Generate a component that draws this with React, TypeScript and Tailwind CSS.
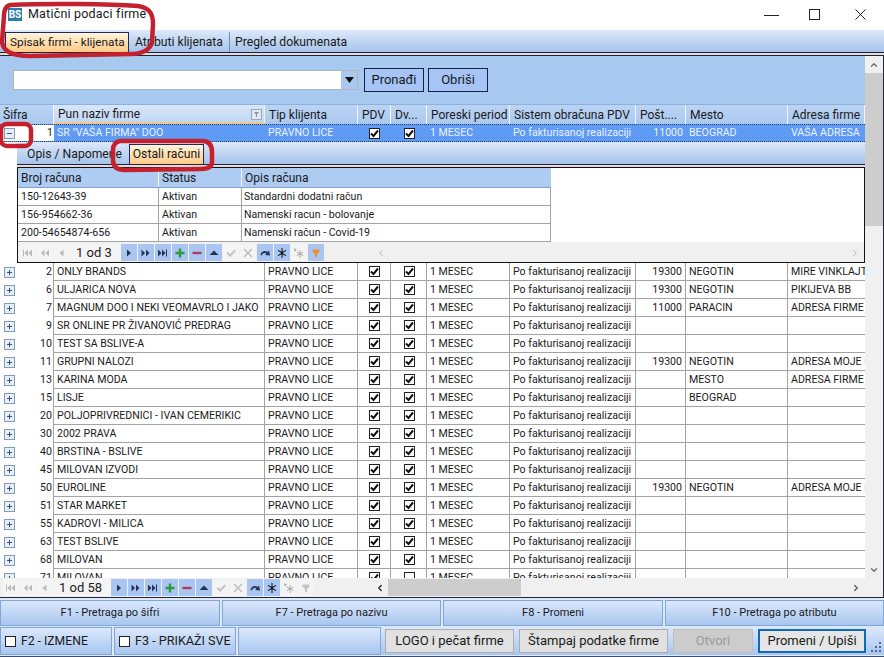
import React from "react";
import { ChevronDown, ChevronLeft, ChevronRight, ChevronUp } from "lucide-react";

const mainCols = "grid grid-cols-[54px_211px_93px_33px_36px_83px_126px_50px_102px_77px]";
const detailCols = "grid grid-cols-[141px_83px_309px]";

const rows = [
  ["2", "ONLY BRANDS", "19300", "NEGOTIN", "MIRE VINKLAJT"],
  ["6", "ULJARICA NOVA", "19300", "NEGOTIN", "PIKIJEVA BB"],
  ["7", "MAGNUM DOO I NEKI VEOMAVRLO I JAKO", "11000", "PARACIN", "ADRESA FIRME"],
  ["9", "SR ONLINE PR ŽIVANOVIĆ PREDRAG", "", "", ""],
  ["10", "TEST SA BSLIVE-A", "", "", ""],
  ["11", "GRUPNI NALOZI", "19300", "NEGOTIN", "ADRESA MOJE FIRME"],
  ["13", "KARINA MODA", "", "MESTO", "ADRESA FIRME"],
  ["15", "LISJE", "", "BEOGRAD", ""],
  ["20", "POLJOPRIVREDNICI - IVAN CEMERIKIC", "", "", ""],
  ["30", "2002 PRAVA", "", "", ""],
  ["40", "BRSTINA - BSLIVE", "", "", ""],
  ["45", "MILOVAN IZVODI", "", "", ""],
  ["50", "EUROLINE", "19300", "NEGOTIN", "ADRESA MOJE FIRME"],
  ["51", "STAR MARKET", "", "", ""],
  ["55", "KADROVI - MILICA", "", "", ""],
  ["63", "TEST BSLIVE", "", "", ""],
  ["68", "MILOVAN", "", "", ""],
  ["71", "MILOVAN", "", "", ""],
];

const accounts = [
  ["150-12643-39", "Aktivan", "Standardni dodatni račun"],
  ["156-954662-36", "Aktivan", "Namenski racun - bolovanje"],
  ["200-54654874-656", "Aktivan", "Namenski račun - Covid-19"],
];

const Check = ({ on = true }: { on?: boolean }) => (
  <span className="w-[11px] h-[11px] border border-[#222] bg-white flex items-center justify-center">
    {on && (
      <svg width="9" height="9" viewBox="0 0 9 9">
        <path d="M1 4.5 L3.5 7 L8 1.5" fill="none" stroke="#111" strokeWidth="2" />
      </svg>
    )}
  </span>
);

const Expander = ({ minus }: { minus?: boolean }) => (
  <span className="w-[11px] h-[11px] border border-[#7f9db9] bg-[#e8eef7] flex items-center justify-center">
    <svg width="7" height="7" viewBox="0 0 7 7">
      <path d={minus ? "M1 3.5 H6" : "M1 3.5 H6 M3.5 1 V6"} stroke="#40536e" strokeWidth="1" />
    </svg>
  </span>
);

type Glyph = "first" | "prevp" | "prev" | "next" | "nextp" | "last" | "add" | "del" | "up" | "ok" | "no" | "redo" | "star" | "starx" | "filter";

const glyphs: Record<Glyph, string> = {
  first: "M1 2.5 H2 V9.5 H1 Z M6 2.5 V9.5 L2.5 6 Z M10 2.5 V9.5 L6.5 6 Z",
  prevp: "M5.5 2.5 V9.5 L2 6 Z M10 2.5 V9.5 L6.5 6 Z",
  prev: "M7.5 2.5 V9.5 L3.5 6 Z",
  next: "M4 2.5 V9.5 L8 6 Z",
  nextp: "M1.5 2.5 V9.5 L5 6 Z M6 2.5 V9.5 L9.5 6 Z",
  last: "M1 2.5 V9.5 L4.5 6 Z M5 2.5 V9.5 L8.5 6 Z M9 2.5 H10 V9.5 H9 Z",
  add: "M4.8 1.5 H7.2 V4.8 H10.5 V7.2 H7.2 V10.5 H4.8 V7.2 H1.5 V4.8 H4.8 Z",
  del: "M1.5 4.8 H10.5 V7.2 H1.5 Z",
  up: "M6 3.5 L10.5 8 H1.5 Z",
  ok: "M1.5 6.5 L3 5 L5 7 L9.5 2.5 L11 4 L5 10 Z",
  no: "M2.5 1.5 L6 5 L9.5 1.5 L10.5 2.5 L7 6 L10.5 9.5 L9.5 10.5 L6 7 L2.5 10.5 L1.5 9.5 L5 6 L1.5 2.5 Z",
  redo: "M1.5 8 C2 4.5 6 3 8.5 5 L10 3.5 L11 8.5 L6 8 L7.5 6.5 C5.5 5.5 3.5 6 3 8.5 Z",
  star: "M5.5 1 H6.5 V4.8 L9.8 2.9 L10.3 3.8 L7 5.7 V6.3 L10.3 8.2 L9.8 9.1 L6.5 7.2 V11 H5.5 V7.2 L2.2 9.1 L1.7 8.2 L5 6.3 V5.7 L1.7 3.8 L2.2 2.9 L5.5 4.8 Z",
  starx: "M6.5 3 H7.5 V6 L10 4.5 L10.5 5.3 L8 6.8 L10.5 8.3 L10 9.1 L7.5 7.6 V11 H6.5 V7.6 L4 9.1 L3.5 8.3 L6 6.8 L3.5 5.3 L4 4.5 L6.5 6 Z M1 1 L4 3 L1.5 4.5 Z",
  filter: "M2.5 2.5 H9.5 V4.5 L7 7 V10 H5 V7 L2.5 4.5 Z",
};

const Tool = ({ g, color, on }: { g: Glyph; color: string; on?: boolean }) => (
  <span className={`w-[16px] h-[17px] mr-px flex items-center justify-center ${on ? "bg-[#a9c6f3]" : "bg-[#f4f4f4]"}`}>
    <svg width="12" height="12" viewBox="0 0 12 12">
      <path d={glyphs[g]} fill={color} />
    </svg>
  </span>
);

const off = "#b9b9b9";
const dark = "#26344f";

const Pager = ({ label, filterOn, labelW }: { label: string; filterOn?: boolean; labelW: string }) => (
  <div className="flex items-center h-[17px]">
    <Tool g="first" color={off} />
    <Tool g="prevp" color={off} />
    <Tool g="prev" color={off} />
    <span className={`${labelW} text-[13px] leading-none text-[#222] bg-[#f4f4f4] h-full flex items-center justify-center pr-[4px]`}>{label}</span>
    <Tool g="next" color={dark} on />
    <Tool g="nextp" color={dark} on />
    <Tool g="last" color={dark} on />
    <Tool g="add" color="#2c9a3c" on />
    <Tool g="del" color="#b33a5e" on />
    <Tool g="up" color={dark} on />
    <Tool g="ok" color="#c4c4c4" />
    <Tool g="no" color="#bdbdbd" />
    <Tool g="redo" color={dark} on />
    <Tool g="star" color="#111" on />
    <Tool g="starx" color="#a9a9a9" />
    {filterOn ? <Tool g="filter" color="#ee8e2a" on /> : <Tool g="filter" color="#c4c4c4" />}
  </div>
);

const BottomCell = ({ text, check, className }: { text: string; check?: boolean; className: string }) => (
  <div className={`h-full flex items-center whitespace-nowrap border border-[#7fa6d8] bg-gradient-to-b from-[#dbe8fb] to-[#a8c6ef] ${className}`}>
    {check && <span className="w-[11px] h-[11px] ml-[4px] mr-[5px] border border-[#222] bg-white shrink-0" />}
    {text}
  </div>
);

const Btn = ({ text, className }: { text: string; className: string }) => (
  <button className={`h-[24px] text-[13px] flex items-center justify-center whitespace-nowrap ${className}`}>{text}</button>
);

export default function App() {
  return (
    <div className="relative w-[884px] h-[657px] overflow-hidden bg-white flex flex-col text-[10.6px] text-[#1a1a1a] font-['Roboto','Liberation_Sans',sans-serif]">
      {/* title bar */}
      <div className="h-[30px] flex items-center shrink-0 pl-[8px] pb-[1px]">
        <span className="w-[14px] h-[13px] bg-[#2c7ea8] text-white text-[10px] font-bold leading-[13px] text-center">BS</span>
        <span className="ml-[6px] text-[12.5px] tracking-[0.2px]">Matični podaci firme</span>
        <div className="ml-auto flex items-center pr-[18px]">
          <svg width="16" height="12" viewBox="0 0 16 12"><path d="M0 6.5 H15" stroke="#222" strokeWidth="1" /></svg>
          <svg className="ml-[29px]" width="11" height="11" viewBox="0 0 11 11"><rect x="0.5" y="0.5" width="10" height="10" fill="none" stroke="#222" /></svg>
          <svg className="ml-[35px]" width="11" height="11" viewBox="0 0 11 11"><path d="M0.5 0.5 L10.5 10.5 M10.5 0.5 L0.5 10.5" stroke="#222" /></svg>
        </div>
      </div>

      {/* tabs */}
      <div className="h-[23px] shrink-0 flex items-end pl-[5px] text-[12.2px] border-b border-[#1c2440] bg-gradient-to-b from-[#dde9fa] to-[#a6c3ea]">
        <div className="w-[124px] h-[20px] flex items-center pl-[4px] text-[11.8px] whitespace-nowrap border border-b-0 border-[#1c2a60] bg-gradient-to-b from-[#fff4da] to-[#ffc987]">Spisak firmi - klijenata</div>
        <div className="w-[100px] h-[20px] flex items-center pl-[6px] whitespace-nowrap">Atributi klijenata</div>
        <div className="h-[20px] flex items-center pl-[5px] whitespace-nowrap border-l border-[#6f8fc0]">Pregled dokumenata</div>
      </div>
      <div className="h-[2px] shrink-0 bg-[#e8d8d8]" />

      {/* main frame */}
      <div className="h-[543px] shrink-0 flex flex-col border-t border-b border-r border-[#1c2440]">
        <div className="flex flex-1 min-h-0">
          <div className="w-[865px] flex flex-col overflow-hidden">
            {/* search */}
            <div className="h-[48px] shrink-0 bg-[#a8c9ef] flex items-center pl-[13px]">
              <div className="w-[345px] h-[20px] mb-[1px] bg-white border border-[#b4b4b4] flex justify-end">
                <span className="w-[16px] bg-[#a9c8f2] flex items-center justify-center">
                  <svg width="9" height="6" viewBox="0 0 9 6"><path d="M0 0 H9 L4.5 6 Z" fill="#111" /></svg>
                </span>
              </div>
              <Btn text="Pronađi" className="ml-[6px] w-[60px] bg-[#a6c4f5] border border-[#14224a] text-[12.5px]" />
              <Btn text="Obriši" className="ml-[4px] w-[60px] bg-[#a6c4f5] border border-[#14224a] text-[12.5px]" />
            </div>

            {/* column headers */}
            <div className={`${mainCols} h-[20px] shrink-0 text-[12px] bg-gradient-to-b from-[#bcd4f3] to-[#aac8ef] border-t border-[#8fb0dc]`}>
              {["Šifra", "Pun naziv firme", "Tip klijenta", "PDV", "Dv...", "Poreski period", "Sistem obračuna PDV", "Pošt....", "Mesto", "Adresa firme"].map((h, i) => (
                <div
                  key={h}
                  className={`flex items-center pt-px overflow-hidden whitespace-nowrap border-r border-[#f2f6fc] ${i === 0 ? "pl-[3px]" : "pl-[4px]"} ${
                    i === 1 ? "bg-gradient-to-b from-[#d8e6f9] to-[#c2d7f4] border-b-2 border-b-[#f5c98a]" : ""
                  }`}
                >
                  {h}
                  {i === 1 && (
                    <svg className="ml-auto mr-[2px]" width="11" height="11" viewBox="0 0 11 11">
                      <rect x="0.5" y="0.5" width="10" height="10" fill="#dfe8f4" stroke="#9aa9bd" />
                      <path d="M3 3 H8 L6 5.5 V8 H5 V5.5 Z" fill="#8896aa" />
                    </svg>
                  )}
                </div>
              ))}
            </div>

            {/* selected row */}
            <div className={`${mainCols} h-[18px] shrink-0 text-[#eaf2ff] bg-[#5f9af4] border-y border-dotted border-[#33415c]`}>
              <div className="bg-white text-[#1a1a1a] flex items-center pr-[1px] pl-[4px]">
                <Expander minus />
                <span className="ml-auto">1</span>
              </div>
              <div className="pl-[3px] leading-[16px]">SR "VAŠA FIRMA" DOO</div>
              <div className="pl-[3px] leading-[16px]">PRAVNO LICE</div>
              <div className="flex items-center justify-center"><Check /></div>
              <div className="flex items-center justify-center pl-[1px]"><Check /></div>
              <div className="pl-[3px] leading-[16px]">1 MESEC</div>
              <div className="pl-[3px] leading-[16px] whitespace-nowrap">Po fakturisanoj realizaciji</div>
              <div className="pr-[3px] text-right leading-[16px]">11000</div>
              <div className="pl-[3px] leading-[16px]">BEOGRAD</div>
              <div className="pl-[3px] leading-[16px] whitespace-nowrap overflow-hidden">VAŠA ADRESA</div>
            </div>

            {/* detail */}
            <div className="shrink-0 pl-[17px] h-[121px] flex flex-col">
              <div className="h-[23px] shrink-0 flex items-end pl-[10px] text-[12.2px] border-b border-[#1c2440] bg-gradient-to-b from-[#dde9fa] to-[#a6c3ea]">
                <div className="w-[102px] h-[20px] flex items-center whitespace-nowrap">Opis / Napomene</div>
                <div className="h-[20px] w-[75px] flex items-center justify-center whitespace-nowrap border border-b-0 border-[#1c2a60] bg-gradient-to-b from-[#fff4da] to-[#ffc987]">Ostali računi</div>
              </div>
              <div className="h-[2px] shrink-0 bg-[#e8d8d8]" />
              <div className="flex-1 flex flex-col border border-[#111] bg-white overflow-hidden">
                <div className={`${detailCols} h-[20px] shrink-0 text-[12px] bg-[#aecbf1] w-[533px] border-b border-[#7fa0cc]`}>
                  <div className="pl-[3px] pt-px flex items-center border-r border-[#eef4fc]">Broj računa</div>
                  <div className="pl-[3px] pt-px flex items-center border-r border-[#eef4fc]">Status</div>
                  <div className="pl-[3px] pt-px flex items-center">Opis računa</div>
                </div>
                {accounts.map((a) => (
                  <div key={a[0]} className={`${detailCols} h-[18px] shrink-0 w-[533px] border-b border-r border-[#a3a3a3]`}>
                    <div className="pl-[3px] pt-px leading-[16px] border-r border-[#a3a3a3]">{a[0]}</div>
                    <div className="pl-[3px] pt-px leading-[16px] border-r border-[#a3a3a3]">{a[1]}</div>
                    <div className="pl-[2px] pt-px leading-[16px]">{a[2]}</div>
                  </div>
                ))}
                <div className="flex-1 bg-[#f0f0f0] flex items-center pl-[2px] pt-[1px]">
                  <Pager label="1 od 3" labelW="w-[50px]" filterOn />
                  <ChevronLeft className="ml-[51px] text-[#bdbdbd]" size={10} strokeWidth={2.5} />
                  <ChevronRight className="ml-auto mr-[4px] text-[#bdbdbd]" size={10} strokeWidth={2.5} />
                </div>
              </div>
            </div>

            {/* rows */}
            <div className="flex-1 overflow-hidden bg-white">
              {rows.map((r) => (
                <div key={r[0]} className={`${mainCols} h-[18px]`}>
                  <div className="flex items-center pr-[1px] pl-[4px] border-r border-[#a3a3a3]">
                    <Expander />
                    <span className="ml-auto">{r[0]}</span>
                  </div>
                  <div className="pl-[3px] leading-[17px] border-r border-b border-[#a3a3a3] whitespace-nowrap overflow-hidden">{r[1]}</div>
                  <div className="pl-[3px] leading-[17px] border-r border-b border-[#a3a3a3]">PRAVNO LICE</div>
                  <div className="flex items-center justify-center border-r border-b border-[#a3a3a3]"><Check /></div>
                  <div className="flex items-center justify-center pl-[1px] border-r border-b border-[#a3a3a3]"><Check on={r[0] !== "71"} /></div>
                  <div className="pl-[3px] leading-[17px] border-r border-b border-[#a3a3a3]">1 MESEC</div>
                  <div className="pl-[3px] leading-[17px] border-r border-b border-[#a3a3a3] whitespace-nowrap">Po fakturisanoj realizaciji</div>
                  <div className="pr-[3px] text-right leading-[17px] border-r border-b border-[#a3a3a3]">{r[2]}</div>
                  <div className="pl-[3px] leading-[17px] border-r border-b border-[#a3a3a3]">{r[3]}</div>
                  <div className="pl-[3px] leading-[17px] border-b border-[#a3a3a3] whitespace-nowrap overflow-hidden">{r[4]}</div>
                </div>
              ))}
            </div>
          </div>

          {/* vertical scrollbar */}
          <div className="flex-1 bg-[#f0f0f0] flex flex-col items-center">
            <div className="h-[17px] w-full flex items-center justify-center">
              <ChevronUp className="text-[#6a6a6a]" size={10} strokeWidth={3} />
            </div>
            <div className="w-full h-[153px] bg-[#cdcdcd]" />
            <div className="mt-auto h-[17px] w-full flex items-center justify-center">
              <ChevronDown className="text-[#6a6a6a]" size={10} strokeWidth={3} />
            </div>
          </div>
        </div>

        {/* bottom pager */}
        <div className="h-[19px] shrink-0 bg-[#f0f0f0] flex items-center pl-[3px]">
          <Pager label="1 od 58" labelW="w-[57px]" />
          <ChevronLeft className="ml-[60px] text-[#222]" size={10} strokeWidth={3} />
          <div className="ml-[3px] w-[133px] h-[17px] bg-[#cdcdcd]" />
          <ChevronRight className="ml-auto mr-[22px] text-[#555]" size={10} strokeWidth={3} />
        </div>
      </div>

      {/* function keys */}
      <div className="bg-[#dfe9f7] flex-1 flex flex-col text-[11px] border-b border-[#3d4d6e]">
        <div className="h-[26px] mt-[2px] flex gap-[2px] text-center">
          <BottomCell text="F1 - Pretraga po šifri" className="w-[220px] justify-center" />
          <BottomCell text="F7 - Pretraga po nazivu" className="w-[219px] justify-center" />
          <BottomCell text="F8 - Promeni" className="w-[220px] justify-center" />
          <BottomCell text="F10 - Pretraga po atributu" className="flex-1 justify-center" />
        </div>
        <div className="h-[28px] mt-[1px] flex items-center">
          <BottomCell text="F2 - IZMENE" check className="w-[112px] text-[12.2px]" />
          <BottomCell text="F3 - PRIKAŽI SVE" check className="ml-[2px] w-[122px] text-[12.6px]" />
          <BottomCell text="" className="ml-[2px] w-[143px]" />
          <div className="flex-1 h-full flex items-center bg-gradient-to-b from-[#dbe8fb] to-[#a8c6ef] pl-[4px]">
            <Btn text="LOGO i pečat firme" className="w-[129px] bg-[#e1e1e1] border border-[#adadad]" />
            <Btn text="Štampaj podatke firme" className="ml-[5px] w-[149px] bg-[#e1e1e1] border border-[#adadad]" />
            <Btn text="Otvori" className="ml-[5px] w-[80px] bg-[#cccccc] border border-[#bfbfbf] text-[#9a9a9a]" />
            <Btn text="Promeni / Upiši" className="ml-[5px] w-[108px] bg-[#e6e6e6] border-2 border-[#0f6cb4]" />
            <svg className="ml-[4px] self-end mb-[2px]" width="12" height="12" viewBox="0 0 12 12">
              <path d="M9 1 h2 v2 h-2 Z M5 5 h2 v2 h-2 Z M9 5 h2 v2 h-2 Z M1 9 h2 v2 h-2 Z M5 9 h2 v2 h-2 Z M9 9 h2 v2 h-2 Z" fill="#4a6a96" />
            </svg>
          </div>
        </div>
      </div>

      {/* red annotations over the screenshot */}
      <svg className="absolute left-0 top-0 pointer-events-none" width="884" height="180" viewBox="0 0 884 180" fill="none" stroke="#c5202e" strokeWidth="4.5">
        <path d="M10 5 C50 3 110 4 138 6 C150 8 153 14 153 24 L152 42 C150 50 142 54 130 54 L30 56 C14 56 3 52 2 42 L4 16 C4 9 6 6 10 5 Z" />
        <rect x="1" y="124" width="30" height="22" rx="6" />
        <path d="M120 141 L202 141 C210 141 212 146 212 152 L212 162 C212 167 208 169 200 169 L125 170 C116 170 113 166 113 160 L113 150 C113 145 115 142 120 141 Z" />
      </svg>
    </div>
  );
}
